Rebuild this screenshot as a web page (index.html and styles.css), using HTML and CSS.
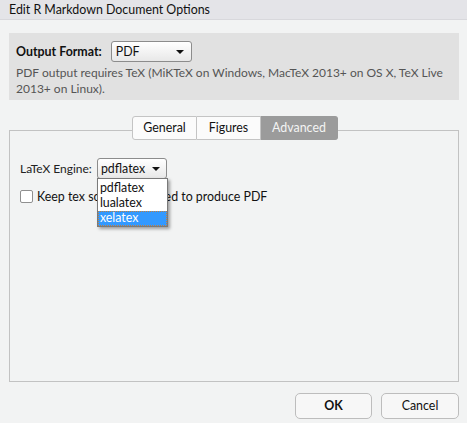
FILE: index.html
```html
<!DOCTYPE html>
<html>
<head>
<meta charset="utf-8">
<link rel="stylesheet" href="styles.css">
</head>
<body>
<div class="titlebar">Edit R Markdown Document Options</div>
<div class="content">
  <div class="format-panel">
    <div class="format-row">
      <span class="format-label">Output Format:</span>
      <div class="select select-pdf"><span>PDF</span><span class="arrow"></span></div>
    </div>
    <div class="format-desc">PDF output requires TeX (MiKTeX on Windows, MacTeX 2013+ on OS X, TeX Live<br>2013+ on Linux).</div>
  </div>
  <div class="tabs">
    <div class="tab tab-first">General</div>
    <div class="tab tab-mid">Figures</div>
    <div class="tab tab-last active">Advanced</div>
  </div>
  <div class="tab-panel">
    <div class="engine-row">
      <span class="engine-label">LaTeX Engine:</span>
      <div class="engine-wrap">
        <div class="select select-engine"><span>pdflatex</span><span class="arrow"></span></div>
        <div class="dropdown">
          <div class="option">pdflatex</div>
          <div class="option">lualatex</div>
          <div class="option selected">xelatex</div>
        </div>
      </div>
    </div>
    <label class="check-row"><span class="checkbox"></span><span>Keep tex source files used to produce PDF</span></label>
  </div>
  <div class="buttons">
    <div class="btn btn-ok">OK</div>
    <div class="btn">Cancel</div>
  </div>
</div>
</body>
</html>
```
FILE: styles.css
```css
html, body {
  margin: 0;
  padding: 0;
}
body {
  width: 467px;
  height: 423px;
  background: #f2f3f3;
  font-family: Lato, "Open Sans", sans-serif;
  font-size: 12px;
  color: #222;
  overflow: hidden;
}
.titlebar {
  height: 20px;
  box-sizing: border-box;
  background: #e4e4e8;
  border-bottom: 1px solid #d8d8dc;
  padding-left: 9px;
  line-height: 19px;
  color: #111;
  font-size: 12.4px;
}
.content {
  padding: 13px 8px 0 9px;
}
.format-panel {
  background: #e1e1e1;
  height: 67px;
  box-sizing: border-box;
  padding: 8px 7px 0 7px;
}
.format-row {
  display: flex;
  align-items: center;
  gap: 9px;
}
.format-label {
  font-weight: bold;
  color: #111;
  font-size: 12.4px;
}
.select {
  display: flex;
  align-items: center;
  justify-content: space-between;
  box-sizing: border-box;
  border: 1px solid #8c8c8c;
  border-radius: 3px;
  background: linear-gradient(#ffffff, #e8e8e8);
  color: #111;
  padding: 0 7px 0 4px;
}
.select-pdf {
  width: 81px;
  height: 21px;
  font-size: 12.4px;
}
.arrow {
  width: 0;
  height: 0;
  border-left: 4px solid transparent;
  border-right: 4px solid transparent;
  border-top: 4px solid #111;
}
.format-desc {
  margin-top: 3px;
  color: #555;
  line-height: 16px;
  white-space: nowrap;
}
.tabs {
  display: flex;
  justify-content: center;
  margin-top: 16px;
  margin-bottom: -10px;
  position: relative;
  z-index: 1;
  padding-left: 2px;
}
.tab {
  height: 24px;
  box-sizing: border-box;
  border: 1px solid #c4c4c4;
  border-left: none;
  background: #fbfbfb;
  line-height: 22px;
  color: #111;
  text-align: center;
  font-size: 12.4px;
}
.tab-first {
  border-left: 1px solid #c4c4c4;
  border-radius: 3px 0 0 3px;
  width: 65px;
}
.tab-mid {
  width: 64px;
}
.tab-last {
  border-radius: 0 3px 3px 0;
  width: 77px;
}
.tab.active {
  background: #9b9b9b;
  border-color: #9b9b9b;
  color: #f4f4f4;
}
.tab-panel {
  height: 252px;
  box-sizing: border-box;
  border: 1px solid #c2c2c2;
  padding: 27px 0 0 10px;
}
.engine-row {
  display: flex;
  align-items: center;
  gap: 5px;
}
.engine-wrap {
  position: relative;
}
.select-engine {
  width: 70px;
  height: 21px;
  padding: 0 6px 0 3px;
  font-size: 12.4px;
}
.dropdown {
  position: absolute;
  left: 0;
  top: 20px;
  width: 71px;
  box-sizing: border-box;
  background: #fff;
  border: 1px solid #7a7a7a;
  box-shadow: 2px 2px 3px rgba(0, 0, 0, 0.35);
  padding-top: 2px;
  z-index: 2;
  font-size: 12.4px;
}
.option {
  height: 15px;
  line-height: 14px;
  padding-left: 2px;
  color: #111;
}
.option.selected {
  background: #3399ff;
  color: #fff;
  outline: 1px dotted #c08040;
  outline-offset: -1px;
}
.check-row {
  display: flex;
  align-items: center;
  gap: 4px;
  margin-top: 10px;
  color: #111;
  font-size: 12.4px;
}
.checkbox {
  width: 11px;
  height: 11px;
  border: 1px solid #8f8f8f;
  border-radius: 2px;
  background: #fff;
}
.buttons {
  display: flex;
  justify-content: flex-end;
  gap: 9px;
  margin-top: 11px;
}
.btn {
  width: 78px;
  height: 26px;
  box-sizing: border-box;
  border: 1px solid #bdbdbd;
  border-radius: 5px;
  background: #f7f7f7;
  text-align: center;
  line-height: 24px;
  color: #111;
  font-size: 12.4px;
}
.btn-ok {
  width: 77px;
  font-weight: bold;
}
```
